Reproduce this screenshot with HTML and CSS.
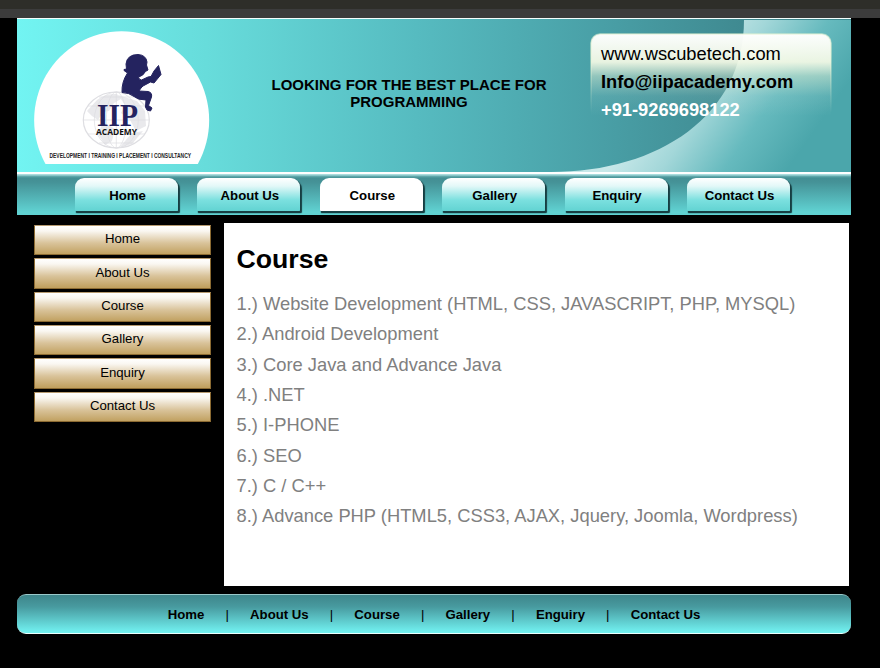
FILE: index.html
```html
<!DOCTYPE html>
<html lang="en">
<head>
<meta charset="utf-8">
<title>IIP Academy - Course</title>
<link rel="stylesheet" href="styles.css">
</head>
<body>
<div class="topbar"></div>
<div class="page">
  <header class="header">
    <svg class="swoosh" viewBox="0 0 300 153" width="300" height="153" aria-hidden="true">
      <defs>
        <linearGradient id="sw" gradientUnits="userSpaceOnUse" x1="120" y1="60" x2="240" y2="145">
          <stop offset="0" stop-color="#c8e8e9"/><stop offset=".3" stop-color="#a3d7d9"/><stop offset=".65" stop-color="#66babe"/><stop offset="1" stop-color="#4ba6ab"/>
        </linearGradient>
      </defs>
      <path d="M193 1H300V153H0C108 153 193 96 193 1Z" fill="url(#sw)"/>
    </svg>
    <svg class="logo" viewBox="34 30 176 134" width="176" height="134" role="img" aria-label="IIP Academy">
      <path d="M45.500 164A87.500 89 0 1 1 197.800 164Z" fill="#fff"/>
      <ellipse cx="116.300" cy="120" rx="33" ry="28" fill="#fff" stroke="#dedee2" stroke-width="1.200"/>
      <path d="M97 100Q105 93 117 94L121 99L114 103L109 111L103 112L98 120L92 116L87 111ZM118 95L137 101L145 111L146 126L136 131L130 120L121 113L125 105ZM103 122L115 129L112 141L105 145L98 134ZM132 133L143 131L132 144L119 148Z" fill="#e9e9ec"/>
      <g fill="none" stroke="#dcdce1" stroke-width=".7"><ellipse cx="116.300" cy="120" rx="22" ry="28"/><ellipse cx="116.300" cy="120" rx="10" ry="28"/><path d="M116.300 92V148M83 120H149M88 106H145M88 134H145M99 97H134M99 143H134"/></g>
      <path d="M126 64Q127 54.500 138 54.500Q146 55 147 62L146.500 65L148 70L145.500 71.500Q143 76 138.500 77Q139 80 141.500 80L148 77L151 76.500L154 71L158.500 65.500L161 74.500L154 83L150.500 82L143 86L141 88L139 91L148 91.500Q152.500 92.500 151.500 97L148.500 105.500L152 108L150.500 111L147 110L145.500 107L146 100Q138 100 134 96.500Q129 92.500 122 92.500Q121.500 82 127.500 73L124 70.500V69.500L126.500 69Z" fill="#24235f" stroke="#24235f" stroke-width="1" stroke-linejoin="round"/>
      <text class="logo-initials" x="97" y="125.700" textLength="41" lengthAdjust="spacingAndGlyphs">IIP</text>
      <text class="logo-name" x="96" y="135" textLength="41" lengthAdjust="spacingAndGlyphs">ACADEMY</text>
      <text class="logo-tag" x="49.500" y="157.500" textLength="141.500" lengthAdjust="spacingAndGlyphs">DEVELOPMENT I TRAINING I PLACEMENT I CONSULTANCY</text>
    </svg>
    <p class="slogan">LOOKING FOR THE BEST PLACE FOR PROGRAMMING</p>
    <div class="contact">
      <div>www.wscubetech.com</div>
      <div class="mail">Info@iipacademy.com</div>
      <div class="phone">+91-9269698122</div>
    </div>
  </header>
  <nav class="nav">
    <a>Home</a><a>About Us</a><a class="active">Course</a><a>Gallery</a><a>Enquiry</a><a>Contact Us</a>
  </nav>
  <div class="main">
    <aside class="side">
      <a>Home</a><a>About Us</a><a>Course</a><a>Gallery</a><a>Enquiry</a><a>Contact Us</a>
    </aside>
    <section class="content">
      <h1>Course</h1>
      <div class="courses">
        <div>1.) Website Development (HTML, CSS, JAVASCRIPT, PHP, MYSQL)</div>
        <div>2.) Android Development</div>
        <div>3.) Core Java and Advance Java</div>
        <div>4.) .NET</div>
        <div>5.) I-PHONE</div>
        <div>6.) SEO</div>
        <div>7.) C / C++</div>
        <div>8.) Advance PHP (HTML5, CSS3, AJAX, Jquery, Joomla, Wordpress)</div>
      </div>
    </section>
  </div>
  <footer class="footer">
    <a>Home</a><i>|</i><a>About Us</a><i>|</i><a>Course</a><i>|</i><a>Gallery</a><i>|</i><a>Enguiry</a><i>|</i><a>Contact Us</a>
  </footer>
</div>
</body>
</html>
```
FILE: styles.css
```css
* { box-sizing: border-box; }
body { margin: 0; background: #000; color: #000; font-family: "Liberation Sans", Arial, sans-serif; font-size: 13.200px; height: 668px; overflow: hidden; }
.topbar { height: 18px; background: linear-gradient(#2e2e29 9px, #3c3c3c 9px); }
.page { width: 834px; margin-left: 17px; }
.header { position: relative; display: flex; height: 156px; border-top: 1px solid #f4ffff; border-bottom: 2px solid #fff; background: linear-gradient(90deg, #72f4f2 0, #67dcdb 190px, #56bbc0 400px, #489da4 600px, #3f8990 730px, #3f8990 100%); }
.swoosh { position: absolute; right: 0; top: 0; }
.logo { position: relative; flex: none; margin: 11px 0 0 17px; }
.slogan { width: 300px; margin: 57px 0 0 49px; font-size: 15px; line-height: 17px; font-weight: bold; text-align: center; }
.contact { position: relative; width: 240px; height: 92px; margin: 15px 0 0 32px; padding: 6px 0 0 10px; font-size: 18.300px; line-height: 28px; border-radius: 9px 9px 0 0; background: linear-gradient(rgba(255,255,255,.98), rgba(244,249,229,.93) 28px, rgba(220,235,210,.5) 42px, rgba(220,235,225,.1) 62px, transparent 82px); }
.contact::before { content: ""; position: absolute; inset: -1px; border: 2px solid #e4f3d4; border-bottom: 0; border-radius: 10px 10px 0 0; opacity: .5; filter: blur(.6px); -webkit-mask: linear-gradient(#000 20px, transparent 80px); mask: linear-gradient(#000 20px, transparent 80px); }
.mail { font-weight: bold; }
.phone { font-weight: bold; color: #fff; }
.nav { display: flex; gap: 18.400px; height: 41px; padding: 4px 0 0 58px; background: linear-gradient(#a9dcdd 0, #a9dcdd 1px, #68aeb1 2px, #438f94 4px, #459297 8px, #60d2d2 38px); }
.nav a { width: 103px; height: 33px; border-radius: 9px 9px 1px 1px; background: linear-gradient(#fff, #e3f8f8 8px, #7be0df 22px, #62d3d2 33px); box-shadow: 1px 1.500px 1px 0 #173f43, 1.500px 2px 1px 0 #173f43; font-weight: bold; line-height: 35px; text-align: center; padding-left: 2px; margin-right: 1px; }
.nav a.active { background: #fff; }
.main { display: flex; padding-top: 8px; }
.side { width: 177px; margin-left: 17px; padding-top: 2px; display: flex; flex-direction: column; gap: 3.400px; }
.side a { height: 30px; border: 1px solid #8c6b32; border-top-color: #b69a70; background: linear-gradient(#fff 0, #faf7f1 5px, #d9c39a 17px, #c1a161 28px); line-height: 26px; text-align: center; }
.side a:nth-child(2) { height: 31px; line-height: 28px; margin-bottom: -1px; }
.side a:nth-child(5) { margin-top: -.400px; height: 31px; line-height: 27px; margin-bottom: -.600px; }
.content { width: 625px; height: 363px; margin-left: 13px; padding: 21px 12.500px 0; background: #fff; }
h1 { margin: 0; font-size: 26.667px; line-height: 31px; }
.courses { margin-top: 14px; color: #808080; font-size: 18.340px; line-height: 30.320px; white-space: nowrap; }
.footer { display: flex; justify-content: center; height: 40px; margin-top: 8px; border-top: 1px solid #9ac9ca; border-bottom: 1px solid #eaffff; border-radius: 9px; background: linear-gradient(#3e858a, #489ba0 12px, #6eeaea 35px, #72f2f0); font-weight: bold; line-height: 39px; }
.footer i { width: 45.700px; font-style: normal; font-weight: normal; text-align: center; }
.logo-initials { font: bold 32px "Liberation Serif", serif; fill: #24235f; }
.logo-name { font: bold 8.800px "Open Sans", sans-serif; fill: #111; }
.logo-tag { font: bold 7.800px "Liberation Sans", sans-serif; fill: #222; }
```
